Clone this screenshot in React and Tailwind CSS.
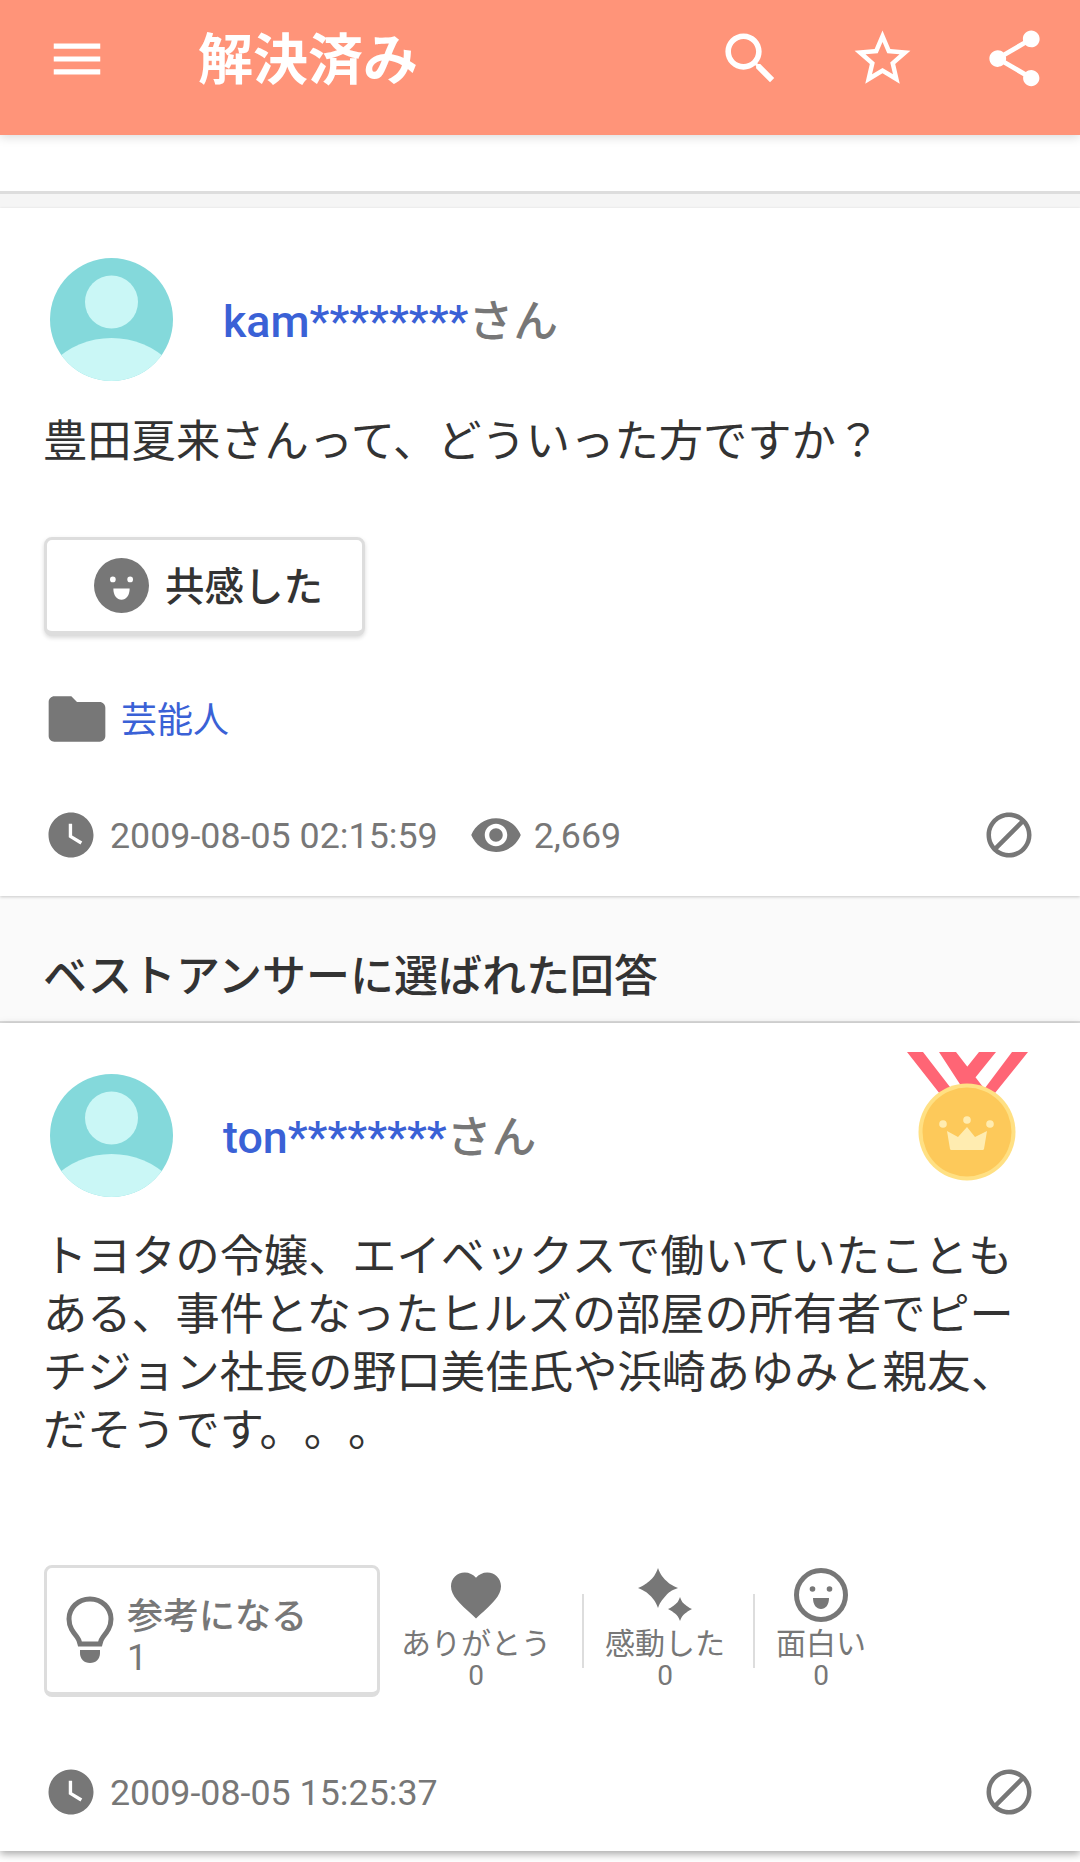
const jp = '"Roboto", "Noto Sans CJK JP", sans-serif';

const Icon = ({ d, size = 48, className = '' }) => (
  <svg width={size} height={size} viewBox="0 0 24 24" fill="currentColor" className={`shrink-0 ${className}`}>
    <path d={d} />
  </svg>
);

const paths = {
  menu: 'M3 18h18v-2H3v2zm0-5h18v-2H3v2zm0-7v2h18V6H3z',
  search: 'M15.5 14h-.79l-.28-.27C15.41 12.59 16 11.11 16 9.5 16 5.91 13.09 3 9.5 3S3 5.91 3 9.5 5.91 16 9.5 16c1.61 0 3.09-.59 4.23-1.57l.27.28v.79l5 4.99L20.49 19l-4.99-5zm-6 0C7.01 14 5 11.99 5 9.5S7.01 5 9.5 5 14 7.01 14 9.5 11.99 14 9.5 14z',
  star: 'M22 9.24l-7.19-.62L12 2 9.19 8.63 2 9.24l5.46 4.73L5.82 21 12 17.27 18.18 21l-1.63-7.03L22 9.24zM12 15.4l-3.76 2.27 1-4.28-3.32-2.88 4.38-.38L12 6.1l1.71 4.04 4.38.38-3.32 2.88 1 4.28L12 15.4z',
  share: 'M18 16.08c-.76 0-1.44.3-1.96.77L8.91 12.7c.05-.23.09-.46.09-.7s-.04-.47-.09-.7l7.05-4.11c.54.5 1.25.81 2.04.81 1.66 0 3-1.34 3-3s-1.34-3-3-3-3 1.34-3 3c0 .24.04.47.09.7L8.04 9.81C7.5 9.31 6.79 9 6 9c-1.66 0-3 1.34-3 3s1.34 3 3 3c.79 0 1.5-.31 2.04-.81l7.12 4.16c-.05.21-.08.43-.08.65 0 1.61 1.31 2.92 2.92 2.92s2.92-1.31 2.92-2.92-1.31-2.92-2.92-2.92z',
  folder: 'M10 4H4c-1.1 0-2 .9-2 2v12c0 1.1.9 2 2 2h16c1.1 0 2-.9 2-2V8c0-1.1-.9-2-2-2h-8l-2-2z',
  clock: 'M12 2C6.5 2 2 6.5 2 12s4.5 10 10 10 10-4.500 10-10S17.500 2 12 2zm4.200 14.200L11 13V7h1.500v5.200l4.500 2.700-.8 1.300z',
  eye: 'M12 4.500C7 4.500 2.730 7.610 1 12c1.730 4.390 6 7.500 11 7.500s9.270-3.110 11-7.500c-1.730-4.390-6-7.500-11-7.500zM12 17c-2.760 0-5-2.240-5-5s2.240-5 5-5 5 2.240 5 5-2.240 5-5 5zm0-8c-1.660 0-3 1.340-3 3s1.340 3 3 3 3-1.340 3-3-1.340-3-3-3z',
  block: 'M12 2C6.480 2 2 6.480 2 12s4.480 10 10 10 10-4.480 10-10S17.520 2 12 2zM4 12c0-4.420 3.580-8 8-8 1.850 0 3.550.63 4.900 1.690L5.690 16.900C4.630 15.550 4 13.850 4 12zm8 8c-1.850 0-3.550-.63-4.900-1.690L18.310 7.100C19.370 8.450 20 10.150 20 12c0 4.420-3.580 8-8 8z',
  heart: 'M12 21.350l-1.450-1.320C5.400 15.360 2 12.280 2 8.500 2 5.420 4.420 3 7.500 3c1.740 0 3.410.81 4.500 2.090C13.090 3.810 14.760 3 16.500 3 19.580 3 22 5.420 22 8.500c0 3.780-3.400 6.860-8.550 11.540L12 21.350z',
};

const Avatar = () => (
  <svg width="123" height="123" viewBox="0 0 123 123" className="shrink-0">
    <defs>
      <clipPath id="avatar-clip"><circle cx="61.500" cy="61.500" r="61.500" /></clipPath>
    </defs>
    <g clipPath="url(#avatar-clip)">
      <rect width="123" height="123" fill="#84d9db" />
      <circle cx="61.500" cy="44" r="26.500" fill="#caf7f6" />
      <circle cx="61.500" cy="163" r="83" fill="#caf7f6" />
    </g>
  </svg>
);

const FaceIcon = ({ size, outline }) => (
  <svg width={size} height={size} viewBox="0 0 54 54" className="shrink-0">
    <circle cx="27" cy="27" r={outline ? 24.500 : 27} fill={outline ? '#fff' : '#777'} stroke="#777" strokeWidth={outline ? 5 : 0} />
    <circle cx="18.500" cy="21" r="2.800" fill={outline ? '#777' : '#fff'} />
    <circle cx="35.500" cy="21" r="2.800" fill={outline ? '#777' : '#fff'} />
    <path d="M19 30h16c0 7-3.500 11-8 11S19 37 19 30z" fill={outline ? '#777' : '#fff'} />
  </svg>
);

const Sparkle = () => (
  <svg width="54" height="54" viewBox="0 0 54 54" className="shrink-0">
    <path d="M20 0c2.500 7 5 9.500 8 12.500S33 17 40 20c-7 2.500-9 4-12 7.500S22.500 33 20 40c-2.500-7-5-9.500-8-12.500S7 23 0 20c7-3 9-5 12-7.500S17.500 7 20 0z" fill="#777" />
    <path d="M42 29c1.500 4.500 3 6 5 7.500s3.500 3 7 4.500c-3.500 1.500-5 3-7 4.500S43.500 49 42 53c-1.500-4-3-6-5-7.500S33.500 42.500 30 41c3.500-1.500 5-3 7-4.500S40.500 33.500 42 29z" fill="#777" />
  </svg>
);

const Bulb = () => (
  <svg width="48" height="68" viewBox="0 0 48 68" className="shrink-0">
    <path d="M24 3C12 3 3 12 3 23c0 8 4 13 8 18 2 2.500 2.500 5 3 7h20c.5-2 1-4.500 3-7 4-5 8-10 8-18C45 12 36 3 24 3z" fill="none" stroke="#777" strokeWidth="5" />
    <path d="M14 54h20v3c0 6-4 10-10 10s-10-4-10-10z" fill="#777" />
  </svg>
);

const Medal = () => (
  <svg width="121" height="130" viewBox="0 0 121 130" className="shrink-0">
    <path d="M0 0h16l27 35-10 7zM32 0h17l27 35-16 8zM72 0h17L68 26l-8-11zM105 0h16L88 41l-10-5z" fill="#ff6575" />
    <circle cx="60" cy="80" r="48.500" fill="#ffe083" />
    <circle cx="60" cy="80" r="44.500" fill="#fdc95a" />
    <path d="M40 79l11 6 9-10 8 10 12-6-3 18a1.500 1.500 0 0 1-1.500 1H44.500a1.500 1.500 0 0 1-1.500-1z" fill="#ffecb0" />
    <circle cx="36" cy="72" r="3.800" fill="#ffecb0" />
    <circle cx="60" cy="68" r="3.800" fill="#ffecb0" />
    <circle cx="83" cy="72" r="3.800" fill="#ffecb0" />
  </svg>
);

const MetaRow = ({ date, views }) => (
  <div className="flex items-center h-[54px] pl-[46px] pr-[46px] text-[#777]">
    <Icon d={paths.clock} size={54} className="-ml-[2px]" />
    <span className="ml-[12px] mt-[4px] text-[35.800px]">{date}</span>
    {views && (
      <>
        <Icon d={paths.eye} size={54} className="ml-[31px]" />
        <span className="ml-[11px] mt-[4px] text-[35.800px]">{views}</span>
      </>
    )}
    <Icon d={paths.block} size={54} className="ml-auto -mr-[2px]" />
  </div>
);

const Reaction = ({ icon, label, count, width, divider }) => (
  <div className={`relative flex flex-col items-center ${width}`}>
    <div className="h-[56px] flex items-center justify-center">{icon}</div>
    <span className="mt-[3px] text-[30px] leading-[36px]">{label}</span>
    <span className="-mt-[2px] text-[28px] leading-[32px]">{count}</span>
    {divider && <div className="absolute left-0 top-[27px] w-[2px] h-[74px] bg-[#ddd]" />}
  </div>
);

const App = () => {
  return (
    <div className="w-[1080px] h-[1862px] overflow-hidden bg-white [text-spacing-trim:space-all]" style={{ fontFamily: jp }}>
      {/* header */}
      <header className="relative z-10 h-[135px] bg-[#ff9479] shadow-[0_2px_10px_rgba(0,0,0,0.15)] flex items-center text-white">
        <Icon d={paths.menu} size={62} className="ml-[46px] -mt-[17px]" />
        <h1 className="ml-[90px] -mt-[14px] text-[55px] font-bold leading-none">解決済み</h1>
        <div className="ml-auto flex items-center -mt-[19px]">
          <Icon d={paths.search} size={67} />
          <Icon d={paths.star} size={67} className="ml-[65px]" />
          <Icon d={paths.share} size={67} className="ml-[65px] mr-[32px]" />
        </div>
      </header>

      <div className="h-[56px]" />
      <div className="h-[3px] bg-[#ddd]" />
      <div className="h-[14px] bg-[#f5f5f5]" />

      {/* question */}
      <section className="h-[688px] relative z-[1] shadow-[0_1px_3px_rgba(0,0,0,0.2)] pt-[50px] bg-white">
        <div className="flex items-center pl-[50px]">
          <Avatar />
          <div className="ml-[50px] mt-[4px] text-[44.800px] font-medium">
            <span className="text-[#3a61d6]">kam********</span>
            <span className="text-[#777]">さん</span>
          </div>
        </div>
        <p className="mt-[32px] pl-[43px] text-[44.300px] leading-[58px] text-[#333]">豊田夏来さんって、どういった方ですか？</p>
        <button className="mt-[66px] ml-[44px] w-[321px] h-[99px] rounded-[8px] border-[3px] border-[#ddd] border-b-[5px] shadow-[0_2px_4px_rgba(0,0,0,0.15)] flex items-center justify-start pl-[47px] gap-[16px] bg-white text-[39.500px] font-medium text-[#333]">
          <FaceIcon size={55} />
          <span className="mt-[4px]">共感した</span>
        </button>
        <div className="mt-[49px] pl-[46px] flex items-center">
          <Icon d={paths.folder} size={68} className="-ml-[3px] text-[#777]" />
          <a className="ml-[10px] mt-[4px] text-[36px] text-[#3a61d6]">芸能人</a>
        </div>
        <div className="mt-[55px]">
          <MetaRow date="2009-08-05 02:15:59" views="2,669" />
        </div>
      </section>

      {/* best answer heading */}
      <div className="h-[127px] bg-[#fafafa] border-b-[2px] border-[#ddd] flex items-end pl-[43px] pb-[18px]">
        <h2 className="text-[44px] font-medium leading-[52px] text-[#333]">ベストアンサーに選ばれた回答</h2>
      </div>

      {/* answer */}
      <section className="h-[828px] shadow-[0_3px_8px_rgba(0,0,0,0.35)] bg-white pt-[29px] relative">
        <div className="flex items-start pl-[50px]">
          <div className="mt-[22px] flex items-center">
            <Avatar />
            <div className="ml-[50px] mt-[5px] text-[44.800px] font-medium">
              <span className="text-[#3a61d6]">ton********</span>
              <span className="text-[#777]">さん</span>
            </div>
          </div>
          <div className="ml-auto mr-[52px]">
            <Medal />
          </div>
        </div>
        <p className="mt-[31px] pl-[43px] pr-[45px] text-[44.200px] leading-[58px] text-[#333]">
          トヨタの令嬢、エイベックスで働いていたこともある、事件となったヒルズの部屋の所有者でピーチジョン社長の野口美佳氏や浜崎あゆみと親友、だそうです。。。
        </p>
        <div className="mt-[105px] pl-[44px] flex items-start text-[#777]">
          <div className="w-[336px] h-[132px] rounded-[8px] border-[3px] border-[#ddd] border-b-[5px] flex items-center pl-[19px] bg-white">
            <Bulb />
            <div className="ml-[13px] mt-[15px]">
              <div className="text-[36px] leading-[41px] font-medium">参考になる</div>
              <div className="text-[36px] leading-[41px]">1</div>
            </div>
          </div>
          <div className="flex pt-[2px]">
            <div className="w-[202px] pr-[10px]">
              <Reaction width="w-[192px]" icon={<Icon d={paths.heart} size={60} />} label="ありがとう" count="0" />
            </div>
            <div className="relative w-[171px] pr-[5px]">
              <div className="absolute left-0 top-[27px] w-[2px] h-[74px] bg-[#ddd]" />
              <Reaction width="w-[166px]" icon={<Sparkle />} label="感動した" count="0" />
            </div>
            <Reaction width="w-[136px]" divider icon={<FaceIcon size={54} outline />} label="面白い" count="0" />
          </div>
        </div>
        <div className="mt-[68px]">
          <MetaRow date="2009-08-05 15:25:37" />
        </div>
      </section>
    </div>
  );
};

export default App;
